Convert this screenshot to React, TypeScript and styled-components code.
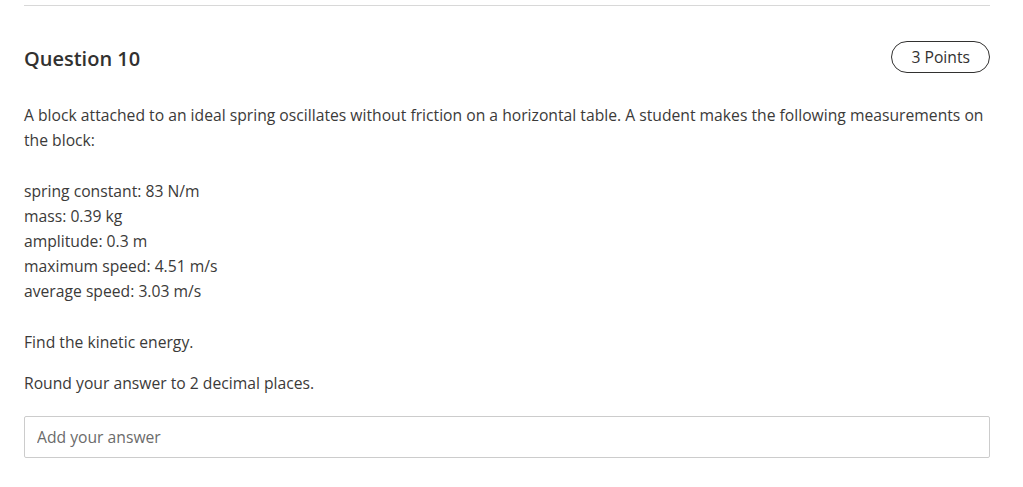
import React from "react";
import styled, { createGlobalStyle } from "styled-components";

const GlobalStyle = createGlobalStyle`
    html, body {
        margin: 0;
        padding: 0;
        background: #ffffff;
    }
    body {
        font-family: "Open Sans", "Noto Sans", sans-serif;
        color: #333333;
    }
`;

const Page = styled.div`
    width: 966px;
    padding: 5px 0 0 24px;
`;

const Divider = styled.div`
    height: 1px;
    background: #d8d8d8;
`;

const Header = styled.div`
    display: flex;
    flex-direction: row;
    align-items: center;
    justify-content: space-between;
    margin-top: 35px;
    height: 32px;
`;

const Title = styled.h2`
    margin: 3px 0 0;
    font-size: 20px;
    font-weight: 600;
    color: #323130;
    line-height: 26px;
`;

const PointsPill = styled.div`
    box-sizing: border-box;
    height: 32px;
    padding: 0 19px;
    border: 1px solid #323130;
    border-radius: 16px;
    display: flex;
    align-items: center;
    font-size: 15.7px;
    color: #323130;
`;

const Body = styled.div`
    margin-top: 30px;
    font-size: 15.7px;
    line-height: 25.2px;
    color: #3b3a39;
`;

const Para = styled.p`
    margin: 0;
`;

const Instruction = styled.p`
    margin: 16px 0 0;
`;

const AnswerInput = styled.input`
    box-sizing: border-box;
    display: block;
    width: 100%;
    height: 42px;
    margin-top: 20px;
    padding: 0 12px;
    border: 1px solid #cccccc;
    border-radius: 2px;
    font-family: "Open Sans", "Noto Sans", sans-serif;
    font-size: 15.7px;
    color: #323130;
    outline: none;

    &::placeholder {
        color: #6b6b6b;
    }
`;

export default function App() {
    return (
        <>
            <GlobalStyle />
            <Page>
                <Divider />
                <Header>
                    <Title>Question 10</Title>
                    <PointsPill>3 Points</PointsPill>
                </Header>
                <Body>
                    <Para>
                        A block attached to an ideal spring oscillates without friction on a horizontal table. A student makes the following measurements on the block:
                        <br />
                        <br />
                        spring constant: 83 N/m
                        <br />
                        mass: 0.39 kg
                        <br />
                        amplitude: 0.3 m
                        <br />
                        maximum speed: 4.51 m/s
                        <br />
                        average speed: 3.03 m/s
                        <br />
                        <br />
                        Find the kinetic energy.
                    </Para>
                    <Instruction>Round your answer to 2 decimal places.</Instruction>
                </Body>
                <AnswerInput placeholder="Add your answer" />
            </Page>
        </>
    );
}
